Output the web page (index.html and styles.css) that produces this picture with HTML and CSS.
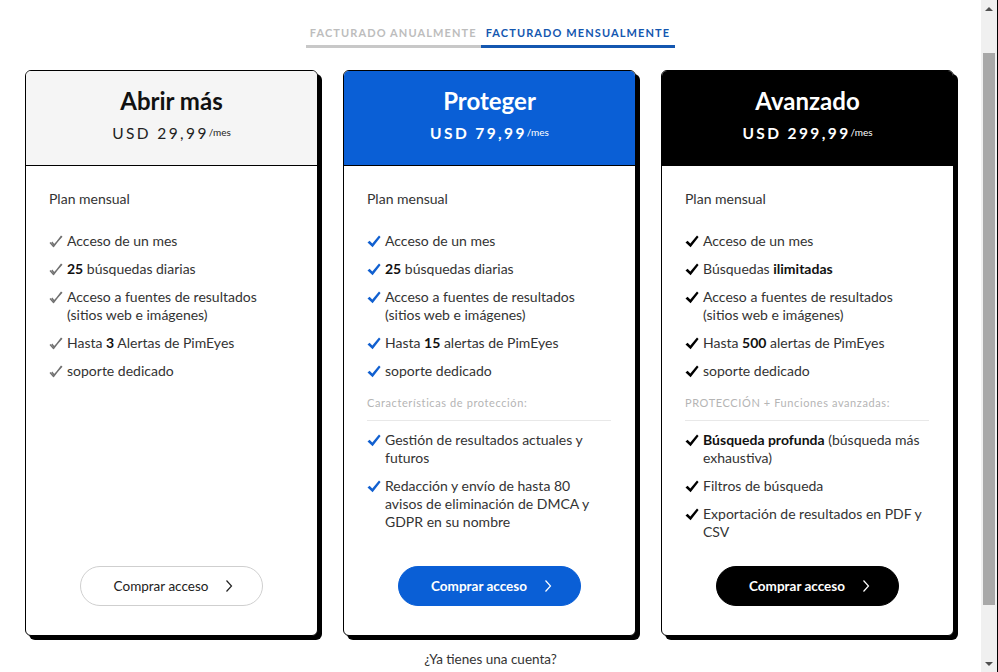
FILE: index.html
```html
<!DOCTYPE html>
<html lang="es">
<head>
<meta charset="utf-8">
<title>Planes</title>
<link rel="stylesheet" href="styles.css">
</head>
<body>
<div class="frame">
  <main class="main">
    <nav class="tabs">
      <span class="tab">FACTURADO ANUALMENTE</span>
      <span class="tab active">FACTURADO MENSUALMENTE</span>
    </nav>
    <section class="cards">
      <article class="card light">
        <header class="card-head">
          <h2 class="title">Abrir más</h2>
          <div class="price">USD 29,99<span class="per">/mes</span></div>
        </header>
        <div class="card-body">
          <p class="plan">Plan mensual</p>
          <ul class="list">
            <li><svg class="chk" viewBox="0 0 14 13"><path d="M1 7.5 L4.5 11.5 L12.5 1 M2.8 7 L5.2 10 L13 1.2" fill="none" stroke="#6f6f6f" stroke-width="1.3" stroke-linejoin="round"/></svg><span>Acceso de un mes</span></li>
            <li><svg class="chk" viewBox="0 0 14 13"><path d="M1 7.5 L4.5 11.5 L12.5 1 M2.8 7 L5.2 10 L13 1.2" fill="none" stroke="#6f6f6f" stroke-width="1.3" stroke-linejoin="round"/></svg><span><b>25</b> búsquedas diarias</span></li>
            <li><svg class="chk" viewBox="0 0 14 13"><path d="M1 7.5 L4.5 11.5 L12.5 1 M2.8 7 L5.2 10 L13 1.2" fill="none" stroke="#6f6f6f" stroke-width="1.3" stroke-linejoin="round"/></svg><span>Acceso a fuentes de resultados (sitios web e imágenes)</span></li>
            <li><svg class="chk" viewBox="0 0 14 13"><path d="M1 7.5 L4.5 11.5 L12.5 1 M2.8 7 L5.2 10 L13 1.2" fill="none" stroke="#6f6f6f" stroke-width="1.3" stroke-linejoin="round"/></svg><span>Hasta <b>3</b> Alertas de PimEyes</span></li>
            <li><svg class="chk" viewBox="0 0 14 13"><path d="M1 7.5 L4.5 11.5 L12.5 1 M2.8 7 L5.2 10 L13 1.2" fill="none" stroke="#6f6f6f" stroke-width="1.3" stroke-linejoin="round"/></svg><span>soporte dedicado</span></li>
          </ul>
          <button class="btn">Comprar acceso <svg class="chev" viewBox="0 0 8 14"><path d="M1.5 1.5 L6.5 7 L1.5 12.5" fill="none" stroke="currentColor" stroke-width="1.2"/></svg></button>
        </div>
      </article>

      <article class="card blue">
        <header class="card-head">
          <h2 class="title">Proteger</h2>
          <div class="price">USD 79,99<span class="per">/mes</span></div>
        </header>
        <div class="card-body">
          <p class="plan">Plan mensual</p>
          <ul class="list">
            <li><svg class="chk" viewBox="0 0 14 13"><path d="M0.5 7.6 L2.6 5.8 L5.3 8.6 L12 0.6 L13.6 1.9 L5.6 12.2 Z" fill="currentColor"/></svg><span>Acceso de un mes</span></li>
            <li><svg class="chk" viewBox="0 0 14 13"><path d="M0.5 7.6 L2.6 5.8 L5.3 8.6 L12 0.6 L13.6 1.9 L5.6 12.2 Z" fill="currentColor"/></svg><span><b>25</b> búsquedas diarias</span></li>
            <li><svg class="chk" viewBox="0 0 14 13"><path d="M0.5 7.6 L2.6 5.8 L5.3 8.6 L12 0.6 L13.6 1.9 L5.6 12.2 Z" fill="currentColor"/></svg><span>Acceso a fuentes de resultados (sitios web e imágenes)</span></li>
            <li><svg class="chk" viewBox="0 0 14 13"><path d="M0.5 7.6 L2.6 5.8 L5.3 8.6 L12 0.6 L13.6 1.9 L5.6 12.2 Z" fill="currentColor"/></svg><span>Hasta <b>15</b> alertas de PimEyes</span></li>
            <li><svg class="chk" viewBox="0 0 14 13"><path d="M0.5 7.6 L2.6 5.8 L5.3 8.6 L12 0.6 L13.6 1.9 L5.6 12.2 Z" fill="currentColor"/></svg><span>soporte dedicado</span></li>
          </ul>
          <p class="section">Características de protección:</p>
          <ul class="list">
            <li><svg class="chk" viewBox="0 0 14 13"><path d="M0.5 7.6 L2.6 5.8 L5.3 8.6 L12 0.6 L13.6 1.9 L5.6 12.2 Z" fill="currentColor"/></svg><span>Gestión de resultados actuales y futuros</span></li>
            <li><svg class="chk" viewBox="0 0 14 13"><path d="M0.5 7.6 L2.6 5.8 L5.3 8.6 L12 0.6 L13.6 1.9 L5.6 12.2 Z" fill="currentColor"/></svg><span>Redacción y envío de hasta 80 avisos de eliminación de DMCA y GDPR en su nombre</span></li>
          </ul>
          <button class="btn">Comprar acceso <svg class="chev" viewBox="0 0 8 14"><path d="M1.5 1.5 L6.5 7 L1.5 12.5" fill="none" stroke="currentColor" stroke-width="1.2"/></svg></button>
        </div>
      </article>

      <article class="card dark">
        <header class="card-head">
          <h2 class="title">Avanzado</h2>
          <div class="price">USD 299,99<span class="per">/mes</span></div>
        </header>
        <div class="card-body">
          <p class="plan">Plan mensual</p>
          <ul class="list">
            <li><svg class="chk" viewBox="0 0 14 13"><path d="M0.5 7.6 L2.6 5.8 L5.3 8.6 L12 0.6 L13.6 1.9 L5.6 12.2 Z" fill="currentColor"/></svg><span>Acceso de un mes</span></li>
            <li><svg class="chk" viewBox="0 0 14 13"><path d="M0.5 7.6 L2.6 5.8 L5.3 8.6 L12 0.6 L13.6 1.9 L5.6 12.2 Z" fill="currentColor"/></svg><span>Búsquedas <b>ilimitadas</b></span></li>
            <li><svg class="chk" viewBox="0 0 14 13"><path d="M0.5 7.6 L2.6 5.8 L5.3 8.6 L12 0.6 L13.6 1.9 L5.6 12.2 Z" fill="currentColor"/></svg><span>Acceso a fuentes de resultados (sitios web e imágenes)</span></li>
            <li><svg class="chk" viewBox="0 0 14 13"><path d="M0.5 7.6 L2.6 5.8 L5.3 8.6 L12 0.6 L13.6 1.9 L5.6 12.2 Z" fill="currentColor"/></svg><span>Hasta <b>500</b> alertas de PimEyes</span></li>
            <li><svg class="chk" viewBox="0 0 14 13"><path d="M0.5 7.6 L2.6 5.8 L5.3 8.6 L12 0.6 L13.6 1.9 L5.6 12.2 Z" fill="currentColor"/></svg><span>soporte dedicado</span></li>
          </ul>
          <p class="section">PROTECCIÓN + Funciones avanzadas:</p>
          <ul class="list">
            <li><svg class="chk" viewBox="0 0 14 13"><path d="M0.5 7.6 L2.6 5.8 L5.3 8.6 L12 0.6 L13.6 1.9 L5.6 12.2 Z" fill="currentColor"/></svg><span><b>Búsqueda profunda</b> (búsqueda más exhaustiva)</span></li>
            <li><svg class="chk" viewBox="0 0 14 13"><path d="M0.5 7.6 L2.6 5.8 L5.3 8.6 L12 0.6 L13.6 1.9 L5.6 12.2 Z" fill="currentColor"/></svg><span>Filtros de búsqueda</span></li>
            <li><svg class="chk" viewBox="0 0 14 13"><path d="M0.5 7.6 L2.6 5.8 L5.3 8.6 L12 0.6 L13.6 1.9 L5.6 12.2 Z" fill="currentColor"/></svg><span>Exportación de resultados en PDF y CSV</span></li>
          </ul>
          <button class="btn">Comprar acceso <svg class="chev" viewBox="0 0 8 14"><path d="M1.5 1.5 L6.5 7 L1.5 12.5" fill="none" stroke="currentColor" stroke-width="1.2"/></svg></button>
        </div>
      </article>
    </section>
    <p class="account">¿Ya tienes una cuenta?</p>
  </main>
  <div class="scrollbar">
    <div class="arrow up"></div>
    <div class="track"><div class="thumb"></div></div>
    <div class="arrow down"></div>
  </div>
</div>
</body>
</html>
```

FILE: styles.css
```css
* { box-sizing: border-box; }
html, body { margin: 0; padding: 0; height: 100%; }
body {
  font-family: "Lato", "Noto Sans", sans-serif;
  color: #222;
  background: #fff;
  overflow: hidden;
}
.frame {
  display: flex;
  height: 672px;
  width: 998px;
}
.main {
  width: 981px;
  height: 672px;
  overflow: hidden;
  padding-top: 26px;
}
.tabs {
  display: flex;
  justify-content: center;
}
.tab {
  font-size: 11px;
  font-weight: 700;
  letter-spacing: 1.1px;
  color: #bdbdbd;
  padding: 0 4px 6px 4px;
  border-bottom: 3px solid #c8c8c8;
  line-height: 13px;
}
.tab.active {
  color: #1457b0;
  border-bottom-color: #1457b0;
  padding: 0 5px 6px 5px;
}
.cards {
  display: flex;
  justify-content: center;
  gap: 25px;
  margin-top: 22px;
  padding-right: 2px;
}
.card {
  width: 293px;
  height: 566px;
  border: 1px solid #000;
  border-radius: 6px;
  box-shadow: 4px 4px 0 #000;
  display: flex;
  flex-direction: column;
  overflow: hidden;
  background: #fff;
}
.card-head {
  height: 95px;
  border-bottom: 1px solid #000;
  text-align: center;
  padding-top: 15px;
}
.light .card-head { background: #f5f5f5; color: #111; }
.blue .card-head { background: #0a5fd6; color: #fff; }
.dark .card-head { background: #000; color: #fff; }
.title {
  margin: 0;
  font-size: 24px;
  line-height: 30px;
  font-weight: 700;
}
.price {
  margin-top: 6px;
  font-size: 15.5px;
  letter-spacing: 2.4px;
  line-height: 20px;
}
.light .price { color: #222; }
.blue .price, .dark .price { font-weight: 700; }
.per {
  font-size: 10px;
  letter-spacing: 0;
  font-weight: 400;
  vertical-align: 3px;
}
.card-body {
  flex: 1;
  display: flex;
  flex-direction: column;
  padding: 24px 27px 29px 23px;
}
.plan {
  margin: 0;
  font-size: 14px;
  line-height: 18px;
  color: #333;
}
.list {
  list-style: none;
  margin: 24px 0 0 0;
  padding: 0;
  display: flex;
  flex-direction: column;
  gap: 10px;
}
.list li {
  display: flex;
  gap: 4px;
  font-size: 14px;
  line-height: 18px;
  color: #333;
}
.list li b { font-weight: 700; color: #111; }
.chk {
  width: 14px;
  height: 13px;
  flex: none;
  margin-top: 3px;
}
.light .chk { color: #6f6f6f; }
.blue .chk { color: #1160d0; }
.dark .chk { color: #000; }
.section {
  margin: 16px -3px 0 0;
  padding-bottom: 10px;
  border-bottom: 1px solid #e8e8e8;
  font-size: 11px;
  letter-spacing: 0.6px;
  line-height: 14px;
  color: #b5b5b5;
}
.section + .list { margin-top: 10px; }
.btn {
  margin: auto 0 0 0;
  align-self: center;
  position: relative;
  left: 2px;
  width: 183px;
  height: 40px;
  border-radius: 20px;
  font-family: inherit;
  font-size: 13.5px;
  display: flex;
  align-items: center;
  justify-content: center;
  gap: 17px;
  cursor: pointer;
  padding: 0 0 0 4px;
}
.light .btn { background: #fff; border: 1px solid #cfcfcf; color: #222; }
.blue .btn { background: #0a5fd6; border: 1px solid #0a5fd6; color: #fff; font-weight: 700; }
.dark .btn { background: #000; border: 1px solid #000; color: #fff; font-weight: 700; }
.chev { width: 8px; height: 14px; }
.account {
  margin: 15px 0 0 0;
  text-align: center;
  font-size: 13.5px;
  color: #333;
}
.scrollbar {
  width: 17px;
  height: 672px;
  background: #f0f0f0;
  border-right: 1px solid #000;
  display: flex;
  flex-direction: column;
}
.arrow {
  height: 17px;
  flex: none;
  display: flex;
  align-items: center;
  justify-content: center;
}
.arrow::after {
  content: "";
  width: 0;
  height: 0;
  border-left: 4px solid transparent;
  border-right: 4px solid transparent;
}
.arrow.up::after { border-bottom: 4px solid #505050; }
.arrow.down::after { border-top: 4px solid #505050; }
.track {
  flex: 1;
  padding: 36px 2px 50px 2px;
  display: flex;
}
.thumb {
  flex: 1;
  background: #a8a8a8;
}
```
